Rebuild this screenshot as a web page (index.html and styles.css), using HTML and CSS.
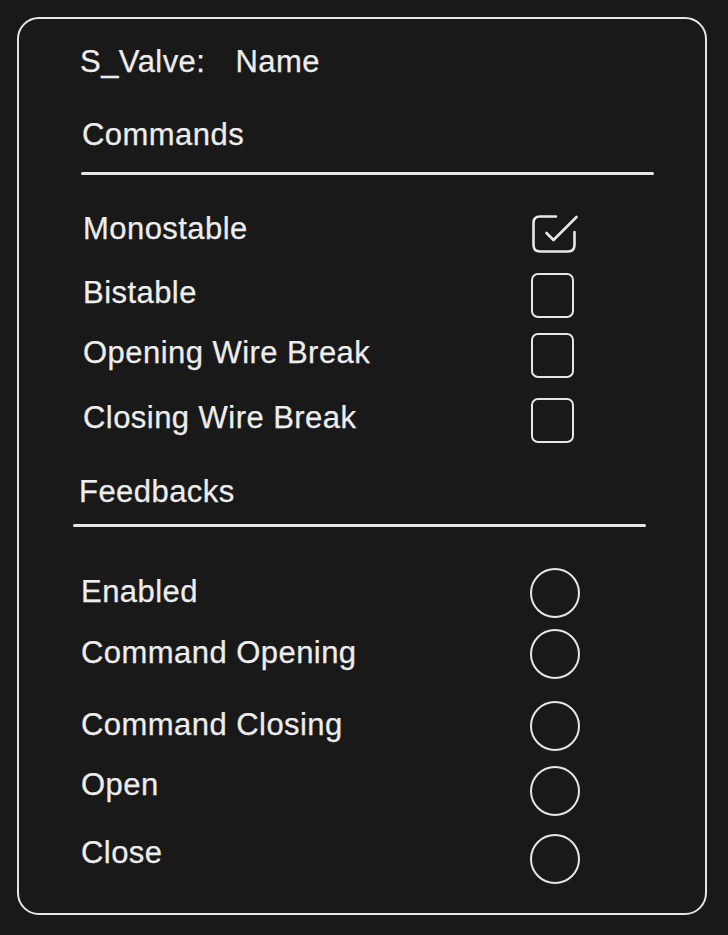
FILE: index.html
```html
<!DOCTYPE html>
<html lang="en">
<head>
<meta charset="utf-8">
<title>S_Valve</title>
<link rel="stylesheet" href="styles.css">
</head>
<body>
<div class="card">
  <div class="header">
    <span>S_Valve:</span>
    <span>Name</span>
  </div>

  <div class="section-title">Commands</div>
  <div class="rule"></div>

  <div class="list commands">
    <div class="label">Monostable</div>
    <svg class="check" width="48" height="42" viewBox="531 213 48 42" aria-hidden="true">
      <path d="M556 216.5 L540 216.5 Q533.5 216.5 533.5 223 L533.5 245 Q533.5 251.5 540 251.5 L568 251.5 Q574.5 251.5 574.5 245 L574.5 232" fill="none" stroke="#e8e8e8" stroke-width="2.6" stroke-linecap="round" stroke-linejoin="round"/>
      <path d="M546.5 233 L553.5 240 L576.5 217" fill="none" stroke="#e8e8e8" stroke-width="2.6" stroke-linecap="round" stroke-linejoin="round"/>
    </svg>

    <div class="label">Bistable</div>
    <div class="box"></div>

    <div class="label">Opening Wire Break</div>
    <div class="box"></div>

    <div class="label">Closing Wire Break</div>
    <div class="box"></div>
  </div>

  <div class="section-title feedbacks-title">Feedbacks</div>
  <div class="rule rule-shift"></div>

  <div class="list feedbacks">
    <div class="label">Enabled</div>
    <div class="lamp"></div>

    <div class="label">Command Opening</div>
    <div class="lamp"></div>

    <div class="label">Command Closing</div>
    <div class="lamp"></div>

    <div class="label">Open</div>
    <div class="lamp lamp-low"></div>

    <div class="label">Close</div>
    <div class="lamp lamp-low"></div>
  </div>
</div>
</body>
</html>
```

FILE: styles.css
```css
html, body {
  margin: 0;
  padding: 0;
  background: #191919;
}

body {
  font-family: "Liberation Sans", Arial, sans-serif;
  font-size: 31px;
  line-height: 36px;
  letter-spacing: 0.45px;
  color: #ededed;
  -webkit-text-stroke: 0.25px #ededed;
}

.card {
  box-sizing: border-box;
  width: 690px;
  height: 898px;
  margin: 17px 0 0 17px;
  border: 2.3px solid #e6e6e6;
  border-radius: 22px;
  padding: 25px 0 0 62px;
}

.header {
  display: flex;
  gap: 30px;
  margin-left: -1px;
}

.section-title {
  margin-top: 37px;
  padding-left: 1px;
}

.rule {
  width: 573px;
  height: 3px;
  margin-top: 19px;
  background: #e6e6e6;
  border-radius: 2px;
}

.list {
  display: grid;
  align-items: start;
}

.commands {
  margin-top: 36px;
  grid-template-columns: 450px 48px;
  grid-template-rows: 64px 60px 65px 63px;
}

.commands .label {
  padding-left: 2px;
}

.check {
  display: block;
  margin-top: 2px;
}

.box {
  box-sizing: border-box;
  width: 43px;
  height: 45px;
  margin-top: -2.5px;
  border: 2.6px solid #e6e6e6;
  border-radius: 7px;
}

.feedbacks-title {
  margin-top: 11px;
  margin-left: -2px;
  padding-left: 0;
}

.rule-shift {
  margin-top: 14px;
  margin-left: -8.5px;
}

.feedbacks {
  margin-top: 47px;
  grid-template-columns: 449px 50px;
  grid-template-rows: 61px 72px 60px 68px 60px;
}

.lamp {
  box-sizing: border-box;
  width: 50px;
  height: 50px;
  margin-top: -6px;
  border: 2.6px solid #e6e6e6;
  border-radius: 50%;
}

.lamp-low {
  margin-top: -1px;
}
```
